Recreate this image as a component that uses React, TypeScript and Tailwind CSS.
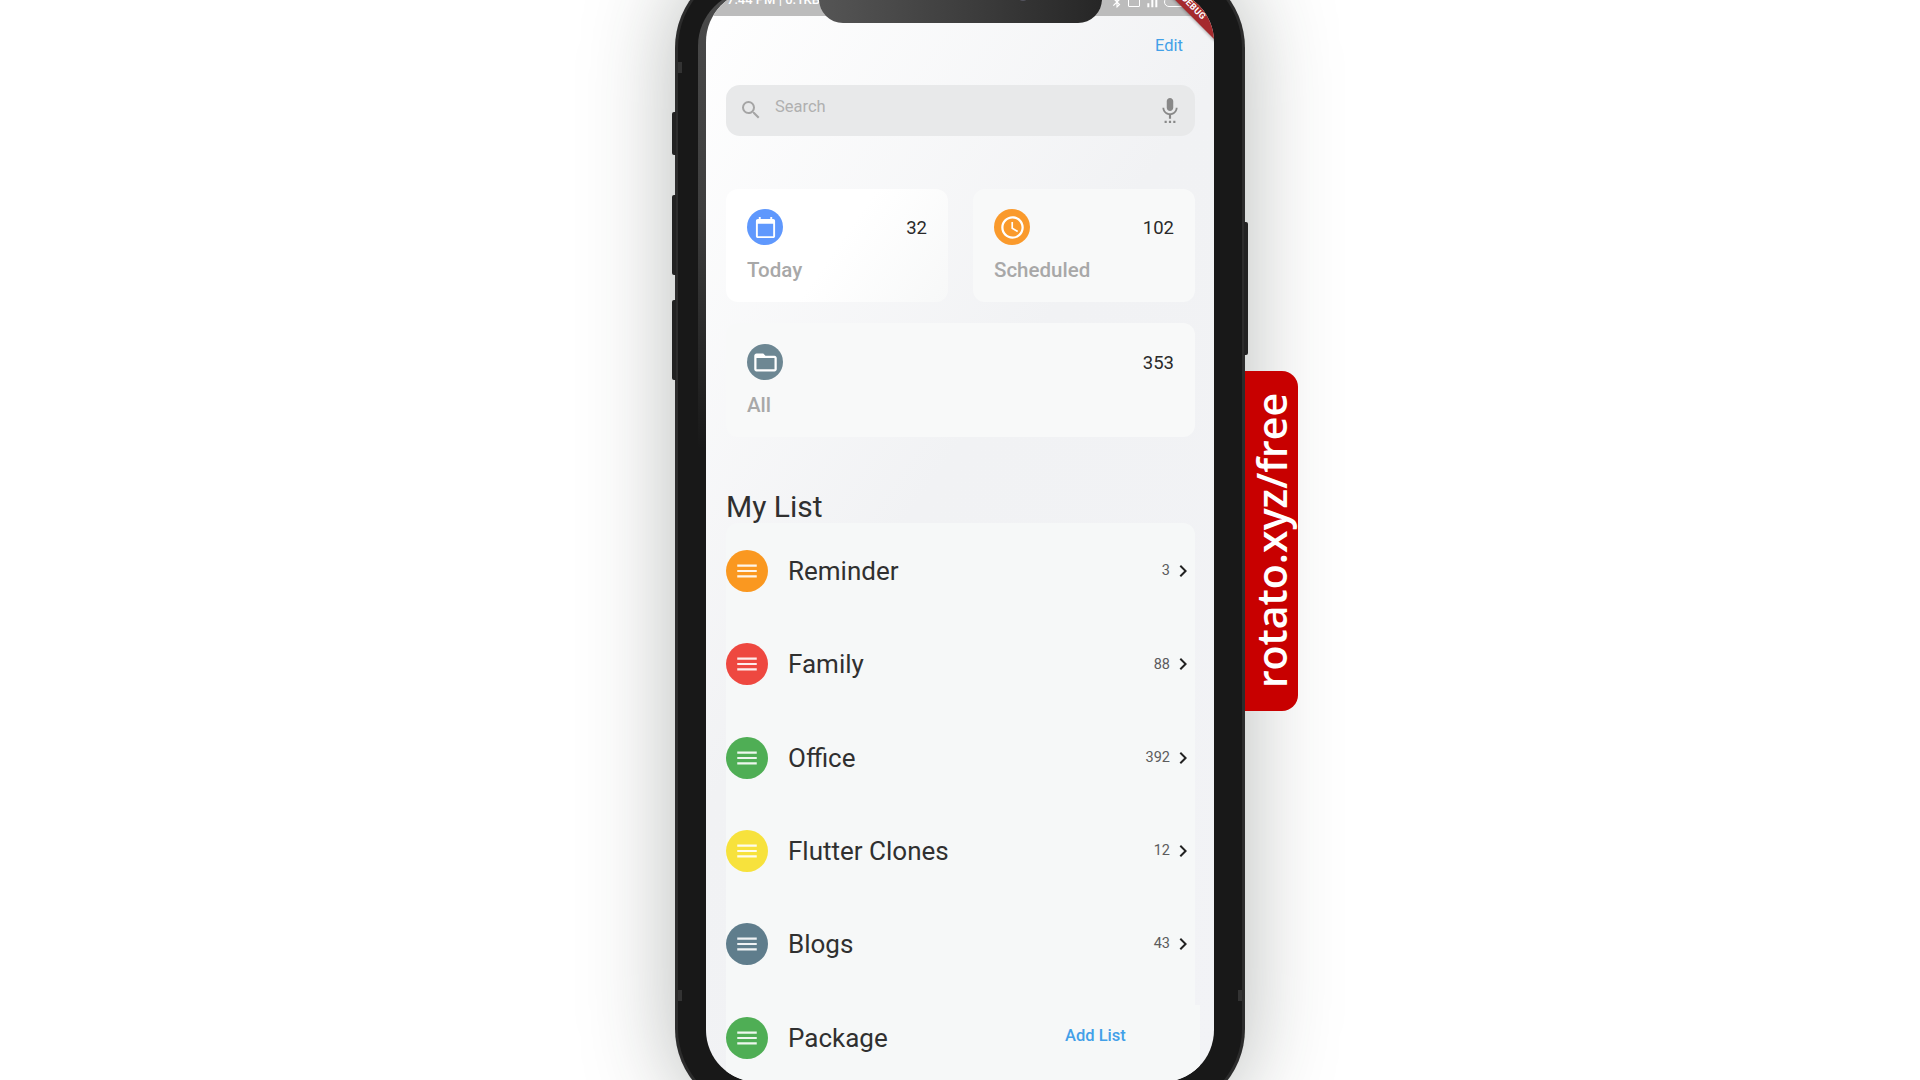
import React from 'react';
import {
  MdAccessTime,
  MdBluetooth,
  MdCalendarToday,
  MdChevronRight,
  MdFolderOpen,
  MdMenu,
  MdSearch,
  MdSettingsVoice,
  MdSignalCellularAlt,
} from 'react-icons/md';

interface ListItem {
  name: string;
  count?: number;
  color: string;
}

const lists: ListItem[] = [
  { name: 'Reminder', count: 3, color: 'bg-[#fa9820]' },
  { name: 'Family', count: 88, color: 'bg-[#ee4840]' },
  { name: 'Office', count: 392, color: 'bg-[#4fae55]' },
  { name: 'Flutter Clones', count: 12, color: 'bg-[#f7e23c]' },
  { name: 'Blogs', count: 43, color: 'bg-[#5f7d8c]' },
  { name: 'Package', color: 'bg-[#4fae55]' },
];

function StatCard({
  icon,
  color,
  label,
  count,
  className,
}: {
  icon: React.ReactNode;
  color: string;
  label: string;
  count: number;
  className: string;
}) {
  return (
    <div className={`rounded-[12px] px-[21px] ${className}`}>
      <div className="flex items-center justify-between">
        <div className={`flex h-[36px] w-[36px] items-center justify-center rounded-full text-white ${color}`}>
          {icon}
        </div>
        <span className="pt-[2px] text-[18.5px] leading-[24px] text-[#2a2a2a]">{count}</span>
      </div>
      <div className="mt-[11px] text-[20.5px] font-medium leading-[28px] text-[#a8a8a8]">{label}</div>
    </div>
  );
}

function ListRow({ item }: { item: ListItem }) {
  return (
    <div className="flex h-[93.3px] shrink-0 items-center">
      <div className={`flex h-[42px] w-[42px] items-center justify-center rounded-full text-white/90 ${item.color}`}>
        <MdMenu size={26} />
      </div>
      <span className="ml-[20px] text-[26px] leading-[34px] text-[#303030]">{item.name}</span>
      {item.count !== undefined && (
        <div className="ml-auto flex items-center pr-[1px] text-[#5c5c5c]">
          <span className="text-[14.5px]">{item.count}</span>
          <MdChevronRight size={24} className="-mr-[1px] ml-[1px] text-[#222]" />
        </div>
      )}
    </div>
  );
}

export default function App() {
  return (
    <div className="flex h-screen justify-center overflow-hidden bg-white font-['Roboto',sans-serif]">
      <div className="relative -mt-[36px] h-[1149px] w-[570px] shrink-0">
        {/* side buttons */}
        <div className="absolute -left-[3px] top-[148px] h-[43px] w-[4px] rounded-l-[2px] bg-[#222]" />
        <div className="absolute -left-[3px] top-[231px] h-[80px] w-[4px] rounded-l-[2px] bg-[#222]" />
        <div className="absolute -left-[3px] top-[336px] h-[80px] w-[4px] rounded-l-[2px] bg-[#222]" />
        <div className="absolute -right-[3px] top-[258px] h-[133px] w-[4px] rounded-r-[2px] bg-[#222]" />

        {/* rotato tag */}
        <div className="absolute left-[570px] top-[407px] flex h-[340px] w-[53px] items-center justify-center rounded-r-[16px] bg-[#c80000]">
          <span className="rotate-180 text-[41px] font-semibold leading-none text-white [writing-mode:vertical-rl] font-['Open_Sans',sans-serif]">
            rotato.xyz/free
          </span>
        </div>

        <div className="h-full w-full rounded-[84px] bg-[#2c2c2c] p-[3px] shadow-[0_0_90px_rgba(40,50,45,0.34)]">
          <div className="relative h-full w-full rounded-[81px] bg-[#181818] pb-[28px] pl-[20px] pr-[28px] pt-[23px]">
            {/* antenna bands */}
            <div className="absolute left-0 top-[95px] h-[11px] w-[4px] bg-[#333]" />
            <div className="absolute left-0 top-[1023px] h-[11px] w-[4px] bg-[#333]" />
            <div className="absolute right-0 top-[1023px] h-[11px] w-[4px] bg-[#333]" />

            <div className="h-full w-full rounded-[56px] bg-[linear-gradient(180deg,#4a4a4a_0%,#3e3e3e_20%,#181818_42%)] pl-[8px]">
              <div className="relative h-full w-full overflow-hidden rounded-[52px] bg-[linear-gradient(125deg,#ffffff_0%,#f1f2f4_45%,#f2f3f6_100%)]">
                {/* status bar */}
                <div className="flex h-[26px] items-start justify-between bg-[#bcbcbc] pl-[21px] pr-[18px] pt-[2px] text-white">
                  <span className="text-[13px] font-medium leading-[16px]">7:44 PM | 0.1KB/s</span>
                  <div className="flex items-center gap-[4px] pr-[8px] pt-[2px]">
                    <MdBluetooth size={14} />
                    <div className="h-[9px] w-[12px] rounded-[1px] border border-white" />
                    <MdSignalCellularAlt size={16} />
                    <div className="h-[10px] w-[24px] rounded-[5px] border border-white" />
                  </div>
                </div>

                <div className="absolute left-[113px] top-0 h-[33px] w-[283px] rounded-b-[24px] bg-[linear-gradient(90deg,#555555,#3a3a3a_60%,#262626)]">
                  <div className="absolute left-[198px] top-[-1px] h-[12px] w-[12px] rounded-full bg-[#55555f]" />
                </div>

                <div className="absolute left-[427px] top-[11px] flex h-[14px] w-[120px] rotate-45 items-center justify-center bg-[#a52a2d] text-[9px] font-bold tracking-[0.3px] text-white shadow-[0_1px_3px_rgba(0,0,0,0.3)]">
                  DEBUG
                </div>

                <div className="absolute bottom-0 left-[489px] h-[77px] w-[5px] bg-[#f6f8f8]" />

                <div className="pl-[20px] pr-[19px]">
                  <div className="flex h-[69px] justify-end pr-[12px] pt-[20px]">
                    <span className="text-[16.5px] leading-[20px] text-[#42a0e8]">Edit</span>
                  </div>

                  <div className="flex h-[51px] items-center rounded-[14px] bg-[#e8e9ea] pb-[2px] pl-[13px] pr-[12px]">
                    <MdSearch size={24} className="text-[#a5a5a5]" />
                    <span className="-mt-[5px] ml-[12px] text-[16.5px] text-[#b0b0b0]">Search</span>
                    <MdSettingsVoice size={26} className="ml-auto text-[#888]" />
                  </div>

                  <div className="mt-[53px] grid grid-cols-2 gap-x-[25px] gap-y-[21px]">
                    <StatCard
                      icon={<MdCalendarToday size={23} />}
                      color="bg-[#5f98fd]"
                      label="Today"
                      count={32}
                      className="h-[113px] bg-[linear-gradient(125deg,#ffffff_50%,#f7f8f8)] pt-[20px]"
                    />
                    <StatCard
                      icon={<MdAccessTime size={27} />}
                      color="bg-[#fa9a2c]"
                      label="Scheduled"
                      count={102}
                      className="h-[113px] bg-[#f8f9f9] pt-[20px]"
                    />
                    <StatCard
                      icon={<MdFolderOpen size={27} />}
                      color="bg-[#6d8793]"
                      label="All"
                      count={353}
                      className="col-span-2 h-[114px] bg-[#f8f9f9] pt-[21px]"
                    />
                  </div>

                  <h2 className="mt-[51px] h-[35px] text-[30px] font-normal leading-[38px] text-[#303030]">My List</h2>

                  <div className="flex h-[600px] flex-col rounded-[12px] bg-[#f6f8f8] pt-[1.5px]">
                    {lists.map((item) => (
                      <ListRow key={item.name} item={item} />
                    ))}
                  </div>
                </div>

                <span className="absolute bottom-[36px] left-[359px] text-[16.5px] font-medium leading-[20px] text-[#42a0e8]">
                  Add List
                </span>
              </div>
            </div>
          </div>
        </div>
      </div>
    </div>
  );
}
